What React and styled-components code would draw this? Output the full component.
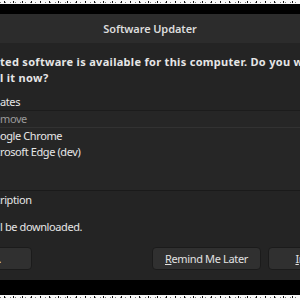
import React from "react";
import styled, { createGlobalStyle } from "styled-components";

const Global = createGlobalStyle`
  html, body { margin: 0; padding: 0; background: #000; overflow: hidden; }
  body { font-family: "Noto Sans", "DejaVu Sans", sans-serif; }
`;

const HIDDEN = 77;

const Screen = styled.div`
  width: 300px;
  height: 300px;
  overflow: hidden;
  background: #000;
  display: flex;
  flex-direction: column;
`;

const Noise = styled.div`
  flex: none;
  height: ${(p) => p.$h}px;
  margin-top: ${(p) => (p.$push ? "auto" : "0")};
  background-color: #f6f6f6;
  background-image: radial-gradient(circle, #111 0.7px, transparent 1.1px),
    radial-gradient(circle, #777 0.6px, transparent 1px);
  background-size: 9px 4px, 5px 3px;
  background-position: 0 0, 3px 1px;
`;

const Window = styled.div`
  flex: none;
  margin: 10px 0 0 -89px;
  width: 478px;
  height: 266px;
  background: #242424;
  color: #e6e6e6;
  font-size: 11px;
  display: flex;
  flex-direction: column;
`;

const TitleBar = styled.div`
  flex: none;
  height: 29px;
  background: #2c2c2c;
  display: flex;
  align-items: center;
  justify-content: center;
  font-weight: 600;
  color: #dcdcdc;
  letter-spacing: -0.1px;
`;

const Body = styled.div`
  flex: 1;
  padding: 11px 12px 10px;
  display: flex;
  flex-direction: column;
`;

const Line = styled.div`
  display: flex;
  white-space: nowrap;
  line-height: ${(p) => p.$lh || 16}px;
  font-weight: ${(p) => (p.$bold ? 700 : 400)};
  letter-spacing: ${(p) => (p.$bold ? "0.3px" : "-0.4px")};
  color: ${(p) => (p.$muted ? "#9a9a9a" : "inherit")};
  margin-top: ${(p) => p.$mt || 0}px;
`;

const Hidden = styled.span`
  flex: 0 0 ${HIDDEN}px;
  display: flex;
  justify-content: flex-end;
`;

const Box = styled.span`
  width: 11px;
  height: 11px;
  margin: 2px 6px 0 0;
  border-radius: 2px;
  background: #e95420;
  flex: none;
`;

const Tree = styled.div`
  background: #262626;
  border-top: 1px solid #1c1c1c;
  border-bottom: 1px solid #1a1a1a;
  height: 79px;
  display: flex;
  flex-direction: column;
`;

const TreeHeader = styled.div`
  height: 17px;
  border-bottom: 1px solid #323232;
  box-sizing: border-box;
  flex: none;
`;

const Buttons = styled.div`
  margin-top: auto;
  display: flex;
  gap: 7px;
`;

const Spacer = styled.div`
  flex: 1;
`;

const Button = styled.button`
  width: 109px;
  height: 23px;
  flex: none;
  padding: 0;
  box-sizing: border-box;
  background: #303030;
  border: 1px solid #1b1b1b;
  border-radius: 4px;
  color: #e2e2e2;
  font-family: inherit;
  font-size: 11px;
  letter-spacing: -0.35px;
  white-space: nowrap;
  display: flex;
  align-items: center;
  justify-content: center;
`;

function Clip({ pre, children, ...rest }) {
  return (
    <Line {...rest}>
      <Hidden>{pre}</Hidden>
      <span>{children}</span>
    </Line>
  );
}

export default function App() {
  return (
    <Screen>
      <Global />
      <Noise $h={4} />
      <Window>
        <TitleBar>Software Updater</TitleBar>
        <Body>
          <Clip $bold pre="Upda">
            ted software is available for this computer. Do you want to
          </Clip>
          <Clip $bold pre="instal">l it now?</Clip>
          <Clip $mt={8} pre="▾ Details of upd">ates</Clip>
          <Tree>
            <TreeHeader>
              <Clip $muted $lh={15} pre="Install or re">move</Clip>
            </TreeHeader>
            <Clip pre={<><Box />Go</>}>ogle Chrome</Clip>
            <Clip pre={<><Box />Mic</>}>rosoft Edge (dev)</Clip>
          </Tree>
          <Clip $mt={1} pre="▸ Technical desc">ription</Clip>
          <Clip $mt={11} pre="190.4 MB wil">l be downloaded.</Clip>
          <Buttons>
            <Button>Settings…</Button>
            <Spacer />
            <Button>
              <u>R</u>emind Me Later
            </Button>
            <Button>
              <u>I</u>nstall Now
            </Button>
          </Buttons>
        </Body>
      </Window>
      <Noise $h={5} $push />
    </Screen>
  );
}
